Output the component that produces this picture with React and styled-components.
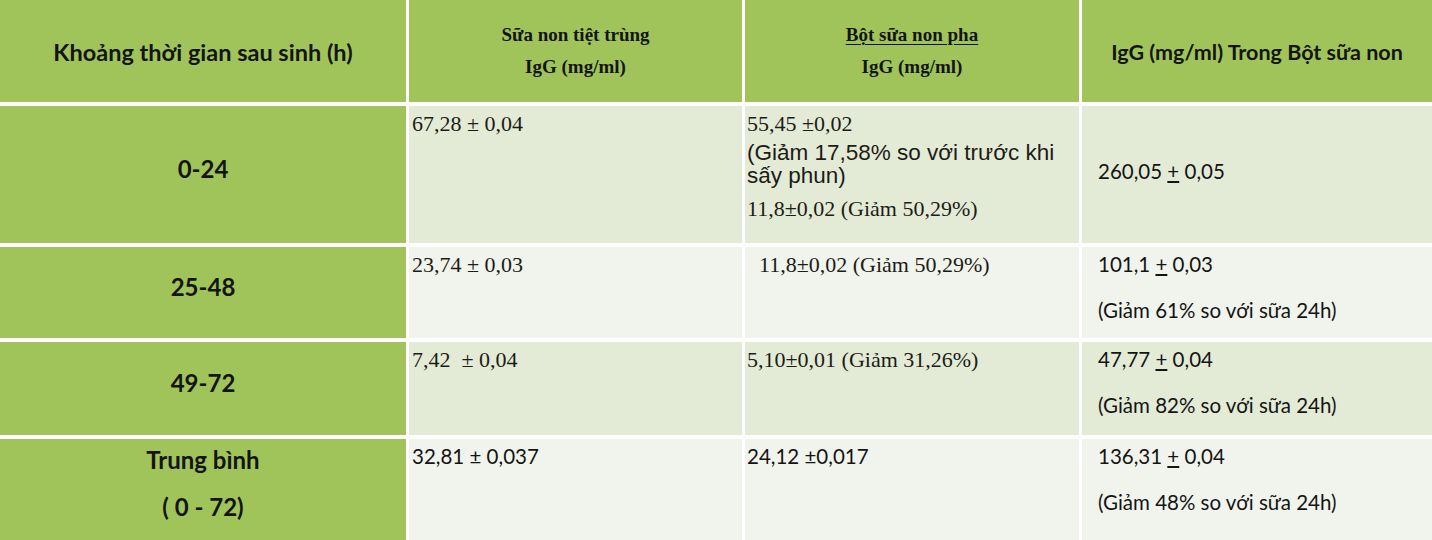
import React from "react";
import styled, { createGlobalStyle } from "styled-components";

const GlobalStyle = createGlobalStyle`
  html, body {
    margin: 0;
    padding: 0;
    background: #ffffff;
  }
  body {
    width: 1432px;
    height: 540px;
    overflow: hidden;
  }
`;

const colors = {
  green: "#a0c45a",
  rowTint: "#e3ebd7",
  rowPale: "#f1f4ec",
  ink: "#141414",
};

const Table = styled.div`
  display: grid;
  grid-template-columns: 406px 333px 334px 1fr;
  grid-template-rows: 102px 137px 91px 93px 101px;
  column-gap: 3px;
  row-gap: 4px;
  width: 1432px;
  height: 540px;
  background: #ffffff;
  color: ${colors.ink};
`;

const HeadCell = styled.div`
  background: ${colors.green};
  display: flex;
  flex-direction: column;
  align-items: center;
  justify-content: center;
  text-align: center;
  padding-top: ${(p) => (p.$serif ? "0" : "2px")};
`;

const LabelCell = styled.div`
  background: ${colors.green};
  display: flex;
  flex-direction: column;
  align-items: center;
  justify-content: center;
  padding-bottom: 12px;
  gap: 23px;
`;

const DataCell = styled.div`
  background: ${(p) => (p.$tint ? colors.rowTint : colors.rowPale)};
  display: flex;
  flex-direction: column;
  justify-content: ${(p) => (p.$middle ? "center" : "flex-start")};
  padding: ${(p) => (p.$middle ? "0 0 7px 16px" : `5px 0 0 ${p.$left || 3}px`)};
`;

const HeadSans = styled.div`
  font-family: Lato, "Open Sans", sans-serif;
  font-weight: 700;
  font-size: ${(p) => p.$size || 23.5}px;
  line-height: 28px;
  white-space: nowrap;
`;

const HeadSerif = styled.div`
  font-family: "Liberation Serif", "Times New Roman", serif;
  font-weight: 700;
  font-size: 19px;
  line-height: 32px;
  white-space: nowrap;
  text-decoration: ${(p) => (p.$underline ? "underline" : "none")};
  text-underline-offset: 3px;
  text-decoration-thickness: 1px;
`;

const Label = styled.div`
  font-family: Lato, "Open Sans", sans-serif;
  font-weight: 700;
  font-size: 24px;
  line-height: 24px;
  white-space: pre;
`;

const SerifValue = styled.div`
  font-family: "Liberation Serif", "Times New Roman", serif;
  font-size: 22px;
  line-height: 26px;
  white-space: pre;
  color: #1c1c16;
  margin-top: ${(p) => p.$gap || 0}px;
  padding-left: ${(p) => p.$indent || 0}px;
`;

const SansNote = styled.div`
  font-family: "Liberation Sans", Arial, sans-serif;
  font-size: 22.5px;
  line-height: 23px;
  white-space: nowrap;
  color: #1c1c16;
  margin-top: ${(p) => p.$gap || 0}px;
`;

const CalValue = styled.div`
  font-family: Lato, "Open Sans", sans-serif;
  font-size: 20.5px;
  line-height: 24px;
  white-space: pre;
  margin-top: ${(p) => p.$gap || 0}px;
`;

const PlusMinus = () => <u>+</u>;

const rows = [
  {
    label: ["0-24"],
    tint: true,
    igg: <SerifValue>67,28 ± 0,04</SerifValue>,
    powder: (
      <>
        <SerifValue>55,45 ±0,02</SerifValue>
        <SansNote $gap={4}>
          (Giảm 17,58% so với trước khi
          <br />
          sấy phun)
        </SansNote>
        <SerifValue $gap={9}>11,8±0,02 (Giảm 50,29%)</SerifValue>
      </>
    ),
    middle: true,
    total: [
      <>
        260,05 <PlusMinus /> 0,05
      </>,
    ],
  },
  {
    label: ["25-48"],
    tint: false,
    igg: <SerifValue>23,74 ± 0,03</SerifValue>,
    powder: <SerifValue $indent={12}>11,8±0,02 (Giảm 50,29%)</SerifValue>,
    total: [
      <>
        101,1 <PlusMinus /> 0,03
      </>,
      "(Giảm 61% so với sữa 24h)",
    ],
  },
  {
    label: ["49-72"],
    tint: true,
    igg: <SerifValue>{"7,42  ± 0,04"}</SerifValue>,
    powder: <SerifValue>5,10±0,01 (Giảm 31,26%)</SerifValue>,
    total: [
      <>
        47,77 <PlusMinus /> 0,04
      </>,
      "(Giảm 82% so với sữa 24h)",
    ],
  },
  {
    label: ["Trung bình", "( 0 - 72)"],
    tint: false,
    igg: <CalValue>32,81 ± 0,037</CalValue>,
    powder: <CalValue>24,12 ±0,017</CalValue>,
    total: [
      <>
        136,31 <PlusMinus /> 0,04
      </>,
      "(Giảm 48% so với sữa 24h)",
    ],
  },
];

export const App = () => {
  return (
    <>
      <GlobalStyle />
      <Table>
        <HeadCell>
          <HeadSans>Khoảng thời gian sau sinh (h)</HeadSans>
        </HeadCell>
        <HeadCell $serif>
          <HeadSerif>Sữa non tiệt trùng</HeadSerif>
          <HeadSerif>IgG (mg/ml)</HeadSerif>
        </HeadCell>
        <HeadCell $serif>
          <HeadSerif $underline>Bột sữa non pha</HeadSerif>
          <HeadSerif>IgG (mg/ml)</HeadSerif>
        </HeadCell>
        <HeadCell>
          <HeadSans $size={21.5}>IgG (mg/ml) Trong Bột sữa non</HeadSans>
        </HeadCell>

        {rows.map((row, i) => (
          <React.Fragment key={i}>
            <LabelCell>
              {row.label.map((line) => (
                <Label key={line}>{line}</Label>
              ))}
            </LabelCell>
            <DataCell $tint={row.tint}>{row.igg}</DataCell>
            <DataCell $tint={row.tint} $left={2}>
              {row.powder}
            </DataCell>
            <DataCell $tint={row.tint} $left={16} $middle={row.middle}>
              {row.total.map((line, j) => (
                <CalValue key={j} $gap={j > 0 ? 22 : 0}>
                  {line}
                </CalValue>
              ))}
            </DataCell>
          </React.Fragment>
        ))}
      </Table>
    </>
  );
};

export default App;
